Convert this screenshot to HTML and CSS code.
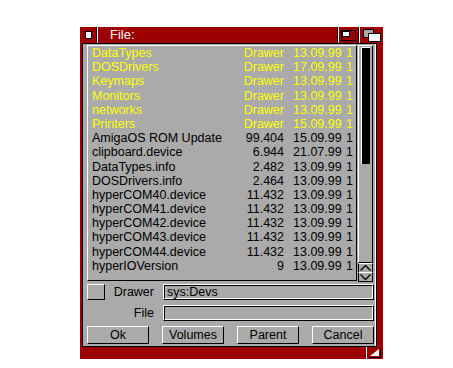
FILE: index.html
```html
<html>
  <head>
    <link rel="stylesheet" href="styles.css">
    <title>File requester</title>
  </head>
  <body>
    <div class="window">
      <div class="titlebar">
        <div class="gadget close-gad"><span class="close-box"></span></div>
        <span class="sep"></span>
        <div class="title">File:</div>
        <span class="sep"></span>
        <div class="gadget depth-gad">
          <svg width="15" height="11" viewBox="0 0 15 11">
            <rect x="0.5" y="0.5" width="14" height="10" fill="#9c0000" stroke="#000"/>
            <rect x="1.5" y="1.5" width="7" height="5" fill="#fff" stroke="#000"/>
          </svg>
        </div>
        <span class="sep"></span>
        <div class="gadget zoom-gad">
          <svg width="18" height="13" viewBox="0 0 18 13">
            <rect x="0.5" y="0.5" width="10" height="8" fill="#aaa" stroke="#000"/>
            <rect x="5.5" y="4.5" width="12" height="8" fill="#fff" stroke="#000"/>
          </svg>
        </div>
      </div>

      <div class="body">
        <div class="browser">
          <div class="listview">
            <div class="row dir"><span class="name">DataTypes</span><span class="size">Drawer</span><span class="date">13.09.99</span><span class="time">1</span></div>
            <div class="row dir"><span class="name">DOSDrivers</span><span class="size">Drawer</span><span class="date">17.09.99</span><span class="time">1</span></div>
            <div class="row dir"><span class="name">Keymaps</span><span class="size">Drawer</span><span class="date">13.09.99</span><span class="time">1</span></div>
            <div class="row dir"><span class="name">Monitors</span><span class="size">Drawer</span><span class="date">13.09.99</span><span class="time">1</span></div>
            <div class="row dir"><span class="name">networks</span><span class="size">Drawer</span><span class="date">13.09.99</span><span class="time">1</span></div>
            <div class="row dir"><span class="name">Printers</span><span class="size">Drawer</span><span class="date">15.09.99</span><span class="time">1</span></div>
            <div class="row"><span class="name">AmigaOS ROM Update</span><span class="size">99.404</span><span class="date">15.09.99</span><span class="time">1</span></div>
            <div class="row"><span class="name">clipboard.device</span><span class="size">6.944</span><span class="date">21.07.99</span><span class="time">1</span></div>
            <div class="row"><span class="name">DataTypes.info</span><span class="size">2.482</span><span class="date">13.09.99</span><span class="time">1</span></div>
            <div class="row"><span class="name">DOSDrivers.info</span><span class="size">2.464</span><span class="date">13.09.99</span><span class="time">1</span></div>
            <div class="row"><span class="name">hyperCOM40.device</span><span class="size">11.432</span><span class="date">13.09.99</span><span class="time">1</span></div>
            <div class="row"><span class="name">hyperCOM41.device</span><span class="size">11.432</span><span class="date">13.09.99</span><span class="time">1</span></div>
            <div class="row"><span class="name">hyperCOM42.device</span><span class="size">11.432</span><span class="date">13.09.99</span><span class="time">1</span></div>
            <div class="row"><span class="name">hyperCOM43.device</span><span class="size">11.432</span><span class="date">13.09.99</span><span class="time">1</span></div>
            <div class="row"><span class="name">hyperCOM44.device</span><span class="size">11.432</span><span class="date">13.09.99</span><span class="time">1</span></div>
            <div class="row"><span class="name">hyperIOVersion</span><span class="size">9</span><span class="date">13.09.99</span><span class="time">1</span></div>
          </div>
          <div class="scroller">
            <div class="prop"><div class="knob"></div></div>
            <div class="arrow">
              <svg width="11" height="6" viewBox="0 0 11 6"><polyline points="0.5,5.5 5.5,0.5 10.5,5.5" fill="none" stroke="#000" stroke-width="1.3"/></svg>
            </div>
            <div class="arrow">
              <svg width="11" height="6" viewBox="0 0 11 6"><polyline points="0.5,0.5 5.5,5.5 10.5,0.5" fill="none" stroke="#000" stroke-width="1.3"/></svg>
            </div>
          </div>
        </div>

        <div class="form-row">
          <span class="checkbox"></span>
          <span class="label">Drawer</span>
          <div class="field"><div class="field-inner">sys:Devs</div></div>
        </div>
        <div class="form-row">
          <span></span>
          <span class="label">File</span>
          <div class="field"><div class="field-inner"></div></div>
        </div>

        <div class="buttons">
          <div class="button">Ok</div>
          <div class="button">Volumes</div>
          <div class="button">Parent</div>
          <div class="button">Cancel</div>
        </div>
      </div>

      <div class="footer">
        <svg class="sizer" width="16" height="12" viewBox="0 0 16 12">
          <line x1="0.5" y1="0" x2="0.5" y2="12" stroke="#fff"/>
          <polygon points="4,9 13,2 13,9" fill="#fff"/>
          <line x1="3" y1="10.5" x2="14" y2="10.5" stroke="#000"/>
          <line x1="14.5" y1="1" x2="14.5" y2="11" stroke="#000"/>
        </svg>
      </div>
    </div>
  </body>
</html>
```

FILE: styles.css
```css
/* Amiga style file requester */
body {
    margin: 0;
    background-color: #fff;
    font-family: "Liberation Sans", Arial, sans-serif;
    font-size: 12.5px;
}

.window {
    width: 303px;
    margin: 27px 0 0 80px;
    background-color: #9c0000;
}

/* Title bar */
.titlebar {
    height: 16px;
    display: flex;
    align-items: stretch;
}

.gadget {
    display: flex;
    align-items: center;
    justify-content: center;
}

.close-gad {
    width: 16px;
}

.close-box {
    width: 5px;
    height: 6px;
    background-color: #fff;
    border: 1px solid #000;
}

.sep {
    width: 0;
    border-left: 1px solid #000;
    border-right: 1px solid #fff;
}

.title {
    flex: 1;
    color: #fff;
    font-size: 13px;
    padding-left: 12px;
    line-height: 16px;
}

.depth-gad {
    width: 19px;
}

.zoom-gad {
    width: 23px;
}

/* Window body */
.body {
    margin: 0 6px 0 2px;
    background-color: #aaa;
    border: 1px solid #000;
    box-shadow: inset -1px 0 0 #fff;
    padding: 1px 0 2px 0;
}

.browser {
    display: flex;
    gap: 1px;
    padding: 0 3px 0 4px;
}

.listview {
    width: 268px;
    height: 234px;
    border-top: 1px solid #fff;
    border-left: 1px solid #fff;
    border-right: 1px solid #000;
    border-bottom: 1px solid #000;
    overflow: hidden;
}

.row {
    display: grid;
    grid-template-columns: 143px 62px 53px 10px;
    height: 14.2px;
    line-height: 14.2px;
    white-space: nowrap;
    color: #000;
}

.row.dir {
    color: #ff0;
}

.name {
    padding-left: 4px;
    overflow: hidden;
}

.size {
    text-align: right;
    padding-right: 9px;
}

/* Scroll bar */
.scroller {
    width: 15px;
    display: flex;
    flex-direction: column;
}

.prop {
    height: 214px;
    border-top: 1px solid #fff;
    border-left: 1px solid #fff;
    border-right: 1px solid #000;
    border-bottom: 1px solid #000;
    padding: 1px 2px;
}

.knob {
    height: 116px;
    background-color: #000;
    border-top: 1px solid #fff;
    border-left: 1px solid #fff;
}

.arrow {
    height: 8px;
    border-top: 1px solid #fff;
    border-left: 1px solid #000;
    border-right: 1px solid #000;
    display: flex;
    align-items: center;
    justify-content: center;
}

.arrow:last-child {
    border-bottom: 1px solid #000;
    height: 8px;
}

/* Drawer / file rows */
.form-row {
    display: grid;
    grid-template-columns: 18px 58px 211px;
    height: 16px;
    margin-top: 5px;
    padding: 0 2px 0 4px;
}

.form-row:first-of-type,
.browser + .form-row {
    margin-top: 2px;
}

.checkbox {
    border-top: 1px solid #fff;
    border-left: 1px solid #fff;
    border-right: 1px solid #000;
    border-bottom: 1px solid #000;
}

.label {
    text-align: right;
    padding-right: 9px;
    line-height: 16px;
}

.field {
    border-top: 1px solid #fff;
    border-left: 1px solid #fff;
    border-right: 1px solid #000;
    border-bottom: 1px solid #000;
}

.field-inner {
    height: 12px;
    border-top: 1px solid #000;
    border-left: 1px solid #000;
    border-right: 1px solid #fff;
    border-bottom: 1px solid #fff;
    padding-left: 2px;
    line-height: 13px;
}

/* Buttons */
.buttons {
    display: flex;
    justify-content: space-between;
    margin-top: 5px;
    padding: 0 2px 0 4px;
}

.button {
    width: 60px;
    height: 16px;
    border-top: 1px solid #fff;
    border-left: 1px solid #fff;
    border-right: 1px solid #000;
    border-bottom: 1px solid #000;
    text-align: center;
    line-height: 16px;
}

/* Bottom border with sizing gadget */
.footer {
    height: 12px;
    display: flex;
    justify-content: flex-end;
    padding-right: 1px;
}
```
